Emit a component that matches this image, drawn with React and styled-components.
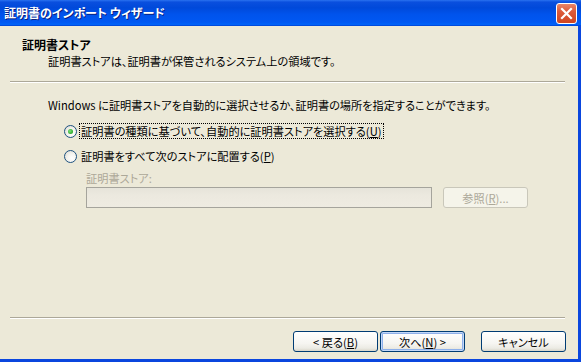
import styled, { createGlobalStyle } from "styled-components"

const GlobalStyle = createGlobalStyle`
  body {
    margin: 0;
    background: #ECE9D8;
    font-family: "Noto Sans CJK JP", "Noto Sans", sans-serif;
    font-feature-settings: "palt";
  }
`

const Window = styled.div`
  width: 581px;
  height: 362px;
  display: flex;
  flex-direction: column;
  background: #ECE9D8;
  font-size: 11.2px;
  color: #000;
`

const TitleBar = styled.div`
  height: 26px;
  flex: none;
  display: flex;
  align-items: flex-start;
  justify-content: space-between;
  padding: 0 4px 0 4px;
  box-sizing: border-box;
  background: linear-gradient(
    to bottom,
    #2a72f0 0%,
    #0a4fde 8%,
    #0049da 30%,
    #0053ec 55%,
    #0058f2 85%,
    #0063f8 94%,
    #003fd0 100%
  );
`

const TitleText = styled.span`
  color: #fff;
  font-weight: bold;
  font-size: 12px;
  line-height: 26px;
  text-shadow: 1px 1px 0 #0a1f80;
`

const CloseButton = styled.button`
  width: 21px;
  height: 21px;
  margin-top: 3px;
  padding: 0;
  border: 1px solid #fff;
  border-radius: 3px;
  background: linear-gradient(to bottom, #e9866a 0%, #dc5a3a 40%, #cf4520 100%);
  display: flex;
  align-items: center;
  justify-content: center;
`

const Frame = styled.div`
  flex: 1;
  display: flex;
  flex-direction: column;
  border-right: 3px solid #0a46de;
  border-bottom: 3px solid #0a46de;
  min-height: 0;
`

const Header = styled.div`
  padding: 11px 0 0 22px;
  line-height: 16px;
`

const HeadTitle = styled.div`
  font-weight: bold;
  font-size: 12px;
`

const HeadSub = styled.div`
  padding-left: 26px;
`

const Separator = styled.div`
  margin: ${(p) => p.$margin};
  border-top: 1px solid #aca899;
  border-bottom: 1px solid #fff;
`

const Content = styled.div`
  flex: 1;
  padding: 14px 0 0 48px;
  line-height: 16px;
`

const RadioList = styled.div`
  margin-top: 9px;
  padding-left: 16px;
  display: flex;
  flex-direction: column;
  gap: 7px;
`

const RadioRow = styled.label`
  display: flex;
  align-items: center;
  height: 18px;
`

const RadioCircle = styled.span`
  width: 13px;
  height: 13px;
  box-sizing: border-box;
  border-radius: 50%;
  border: 1px solid #1c5180;
  background: radial-gradient(circle at 65% 65%, #ffffff 0%, #f4f3ee 45%, #d8d6cc 100%);
  display: flex;
  align-items: center;
  justify-content: center;
  margin-right: 2px;
  flex: none;

  &::after {
    content: "";
    width: 5px;
    height: 5px;
    border-radius: 50%;
    background: radial-gradient(circle at 40% 40%, #7ee27a 0%, #2aa82a 70%, #1e901e 100%);
    display: ${(p) => (p.$checked ? "block" : "none")};
  }
`

const RadioLabel = styled.span`
  padding: 0 1px;
  border: 1px dotted ${(p) => (p.$focused ? "#000" : "transparent")};
  line-height: 14px;
`

const StoreBlock = styled.div`
  padding-left: 38px;
  margin-top: 5px;
`

const MutedLabel = styled.div`
  color: #aca899;
`

const FieldRow = styled.div`
  display: flex;
  gap: 11px;
  margin-top: 1px;
`

const TextBox = styled.div`
  width: 346px;
  height: 21px;
  box-sizing: border-box;
  border: 1px solid #a5a49c;
  background: linear-gradient(to bottom, #e6e4da, #ece9df 40%, #eeebe1);
`

const Button = styled.button`
  width: 85px;
  height: 21px;
  box-sizing: border-box;
  padding: 0;
  font-family: inherit;
  font-feature-settings: "palt";
  font-size: 11.2px;
  line-height: 18px;
  border-radius: 3px;
  border: 1px solid ${(p) => (p.disabled ? "#c9c7ba" : "#003c74")};
  color: ${(p) => (p.disabled ? "#aca899" : "#000")};
  background: ${(p) =>
    p.disabled
      ? "#f5f4ea"
      : "linear-gradient(to bottom, #ffffff 0%, #f6f5f1 60%, #ecebe4 85%, #d9d5c9 100%)"};
  box-shadow: ${(p) =>
    p.$default ? "inset 0 0 0 1px #c4d8f8, inset 0 0 0 2px #8eb0ea" : "none"};
`

const Footer = styled.div`
  display: flex;
  justify-content: flex-end;
  padding: 12px 12px 7px 0;
`

const ButtonGap = styled.span`
  width: ${(p) => p.$w}px;
`

const CloseIcon = () => (
  <svg width="13" height="13" viewBox="0 0 13 13">
    <path d="M2 2 L11 11 M11 2 L2 11" stroke="#fff" strokeWidth="2.2" strokeLinecap="square" />
  </svg>
)

export default function App() {
  return (
    <>
      <GlobalStyle />
      <Window>
        <TitleBar>
          <TitleText>証明書のインポート ウィザード</TitleText>
          <CloseButton>
            <CloseIcon />
          </CloseButton>
        </TitleBar>
        <Frame>
          <Header>
            <HeadTitle>証明書ストア</HeadTitle>
            <HeadSub>証明書ストアは、証明書が保管されるシステム上の領域です。</HeadSub>
          </Header>
          <Separator $margin="12px 13px 0 10px" />
          <Content>
            <div>Windows に証明書ストアを自動的に選択させるか、証明書の場所を指定することができます。</div>
            <RadioList>
              <RadioRow>
                <RadioCircle $checked />
                <RadioLabel $focused>
                  証明書の種類に基づいて、自動的に証明書ストアを選択する(<u>U</u>)
                </RadioLabel>
              </RadioRow>
              <RadioRow>
                <RadioCircle />
                <RadioLabel>
                  証明書をすべて次のストアに配置する(<u>P</u>)
                </RadioLabel>
              </RadioRow>
            </RadioList>
            <StoreBlock>
              <MutedLabel>証明書ストア:</MutedLabel>
              <FieldRow>
                <TextBox />
                <Button disabled>
                  参照(<u>R</u>)...
                </Button>
              </FieldRow>
            </StoreBlock>
          </Content>
          <Separator $margin="0 13px 0 10px" />
          <Footer>
            <Button>
              &lt; 戻る(<u>B</u>)
            </Button>
            <ButtonGap $w={2} />
            <Button $default>
              次へ(<u>N</u>) &gt;
            </Button>
            <ButtonGap $w={16} />
            <Button>キャンセル</Button>
          </Footer>
        </Frame>
      </Window>
    </>
  )
}
